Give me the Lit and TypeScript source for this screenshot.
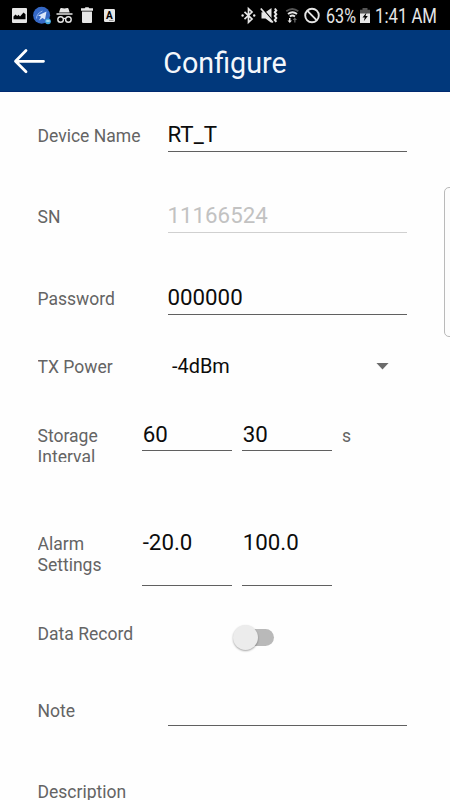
import { LitElement, html, css, svg, nothing } from "lit";
import { customElement, property } from "lit/decorators.js";

@customElement("status-bar")
class StatusBar extends LitElement {
  static styles = css`
    :host { display: flex; height: 30px; background: #000; }
    svg { display: block; width: 450px; height: 30px; }
    text { font-family: Roboto, sans-serif; font-size: 19.5px; fill: #e6e6e6; }
    .badge { font-size: 10px; font-weight: 700; fill: #000; }
  `;
  render() {
    return html`<svg viewBox="0 0 450 30" fill="none">
      ${svg`
      <path fill="#e6e6e6" fill-rule="evenodd" d="M13 8h13a1 1 0 0 1 1 1v13a1 1 0 0 1-1 1H13a1 1 0 0 1-1-1V9a1 1 0 0 1 1-1zM13.5 16.500v2.800h12v-5l-2-1.800-3.500 4-1.500-1.800-1.300 1.300-1.700-1.500z"/>
      <circle cx="41.6" cy="15.3" r="8.5" fill="#3568c5"/>
      <path d="M38 15.500l8.500-4-1.500 8-2.600-1.500-3.400 2.500 2-4z" fill="#dbe6fa"/>
      <path d="M36.500 18.500q0-5 6-7.500" stroke="#93b4ee" stroke-width="1"/>
      <circle cx="48" cy="21.300" r="2.900" fill="#46a9df"/>
      <path d="M46.300 21h3.400" stroke="#fff" stroke-width="1"/>
      <path fill="#e6e6e6" d="M60.300 8.600q.3-.9 1.200-.6l2.900.5 2.800-.5q.9-.3 1.200.6l1.300 3.800h-10.700zM56.500 13.200h16v1.600h-16z"/>
      <circle cx="60.600" cy="19.500" r="2.800" stroke="#e6e6e6" stroke-width="1.400"/>
      <circle cx="68.400" cy="19.500" r="2.800" stroke="#e6e6e6" stroke-width="1.400"/>
      <path d="M63.200 18.800q1.300-.8 2.600 0" stroke="#e6e6e6" stroke-width="1.200"/>
      <path fill="#e6e6e6" d="M81 8.300h3.700l.8-1h3l.8 1H93v2.400H81zM82 11.500h10V22q0 1-1 1h-8q-1 0-1-1z"/>
      <rect x="104" y="9" width="11" height="13" rx="1.200" fill="#e6e6e6"/>
      <text class="badge" x="105.900" y="18.500">A</text>
      <path d="M109 20.400h4.500" stroke="#888" stroke-width=".9"/>
      <path d="M244.500 11.800l7.500 7.200L248.500 22.300V8.700l3.500 3.300-7.500 7.200" stroke="#e6e6e6" stroke-width="1.700"/>
      <circle cx="242.600" cy="15.500" r="1.200" fill="#e6e6e6"/><circle cx="254.200" cy="15.500" r="1.200" fill="#e6e6e6"/>
      <path fill="#e6e6e6" d="M261.500 12.300h4L271.500 8v15l-6-4.400h-4z"/>
      <path d="M261.500 7.500l12.500 14.500" stroke="#000" stroke-width="1.200"/>
      <path d="M260.800 8.500l12 14" stroke="#e6e6e6" stroke-width="1.800"/>
      <path d="M274.800 8.500l1.500 1.900-1.500 1.900 1.500 1.900-1.500 1.900 1.500 1.900-1.500 1.900 1.500 1.900" stroke="#e6e6e6" stroke-width="2"/>
      <path d="M286.300 11.300q6-4.600 12 0" stroke="#555" stroke-width="1.800"/>
      <path d="M288 14q4.500-3.500 9 0M289.800 16.500q2.600-2 5.200 0" stroke="#e6e6e6" stroke-width="1.800"/>
      <path fill="#e6e6e6" d="M290.500 18v2.500h1.500L289.800 23l-2.300-2.500h1.500V18z"/>
      <path fill="#666" d="M295.500 22.500V20H297l-2.200-2.500-2.100 2.500h1.500v2.500z"/>
      <circle cx="312" cy="15.500" r="6.800" stroke="#e6e6e6" stroke-width="1.900"/>
      <path d="M307.200 10.700l9.600 9.600" stroke="#e6e6e6" stroke-width="1.900"/>
      <text x="326" y="22.500" textLength="30" lengthAdjust="spacingAndGlyphs">63%</text>
      <path fill="#555" d="M362.500 8h5v1.700h2.500V14h-10V9.700h2.500z"/>
      <path fill="#e6e6e6" d="M360 13.500h10V23h-10z"/>
      <path fill="#000" d="M366.500 12.500l-4 5h2.300l-1 3.800 4-5.300h-2.300z"/>
      <text x="375" y="22.500" textLength="62" lengthAdjust="spacingAndGlyphs">1:41 AM</text>
      `}
    </svg>`;
  }
}

@customElement("form-row")
class FormRow extends LitElement {
  @property() label = "";
  static styles = css`
    :host { display: flex; align-items: flex-start; box-sizing: border-box; }
    .label { flex: none; width: 104.500px; padding-top: 6px; font-size: 17.550px; line-height: 21px; color: #646464; }
    :host([wide]) .label { width: 130px; }
    .text { display: block; white-space: pre-line; overflow: hidden; }
    :host([clipped]) .text { height: 35.500px; }
  `;
  render() {
    return html`<div class="label"><span class="text">${this.label}</span></div><slot></slot>`;
  }
}

@customElement("app-root")
class AppRoot extends LitElement {
  static styles = css`
    :host { display: block; position: relative; width: 450px; height: 800px; overflow: hidden; background: #fefefe; font-family: Roboto, sans-serif; }
    .bar { display: grid; grid-template-columns: 60px 1fr 60px; align-items: center; height: 62px; background: #01387b; box-sizing: border-box; border-bottom: 1px solid #012a70; }
    .back { width: 34px; height: 28px; margin-left: 12px; }
    .title { color: #f4f7fb; font-size: 28.700px; line-height: 34px; text-align: center; padding-top: 4px; }
    .form { display: flex; flex-direction: column; padding: 28px 43px 0 37.500px; }
    .h82 { height: 82px; } .h81 { height: 81px; } .h68 { height: 68px; } .h69 { height: 69px; }
    .h108 { height: 108px; } .h90 { height: 90px; } .h77 { height: 77px; } .h24 { height: 24px; }
    .field { box-sizing: border-box; width: 240px; height: 31.500px; padding-top: 1px; font-size: 22.300px; line-height: 26px; color: #0c0c0c; border-bottom: 1px solid #606060; }
    .short { width: 90px; height: 31px; margin-right: 10px; text-indent: 0.700px; }
    .tall { height: 58px; }
    .note { height: 31px; }
    .muted { color: #c2c2c2; border-color: #d0d0d0; }
    .select { display: flex; justify-content: space-between; align-items: center; width: 217px; height: 30px; padding-left: 4.500px; font-size: 19.900px; color: #0c0c0c; }
    .caret { width: 13px; height: 7px; background: #6b6b6b; clip-path: polygon(0 0, 100% 0, 50% 100%); }
    .unit { padding-top: 6px; font-size: 17.550px; line-height: 21px; color: #646464; }
    .track { width: 36px; height: 17px; margin: 11px 0 0 95.500px; border-radius: 9px; background: #b9b9b9; display: flex; align-items: center; }
    .thumb { flex: none; width: 25px; height: 25px; border-radius: 50%; background: #ececec; margin-left: -4.500px; box-shadow: 0 1px 2px rgba(0,0,0,.35); }
    .edge { position: absolute; left: 444px; top: 187px; width: 20px; height: 148px; border: 1px solid #b9b9b9; border-radius: 5px; background: #fcfcfc; }
  `;
  field(value: string, kind = "") {
    return html`<div class="field ${kind}">${value || nothing}</div>`;
  }
  render() {
    return html`
      <status-bar></status-bar>
      <header class="bar">
        <svg class="back" viewBox="0 0 34 28" fill="none" stroke="#fff" stroke-width="2.800" stroke-linecap="round" stroke-linejoin="round"><path d="M14 3.500L3.500 14.300 14 24.800M4 14.300h27.500"/></svg>
        <div class="title">Configure</div>
      </header>
      <main class="form">
        <form-row wide class="h81" label="Device Name">${this.field("RT_T")}</form-row>
        <form-row wide class="h82" label="SN">${this.field("11166524", "muted")}</form-row>
        <form-row wide class="h68" label="Password">${this.field("000000")}</form-row>
        <form-row wide class="h69" label="TX Power">
          <div class="select"><span>-4dBm</span><i class="caret"></i></div>
        </form-row>
        <form-row clipped class="h108" label=${"Storage\nInterval"}>
          ${this.field("60", "short")}${this.field("30", "short")}<span class="unit">s</span>
        </form-row>
        <form-row class="h90" label=${"Alarm\nSettings"}>
          ${this.field("-20.0", "short tall")}${this.field("100.0", "short tall")}
        </form-row>
        <form-row class="h77" label="Data Record"><div class="track"><div class="thumb"></div></div></form-row>
        <form-row wide class="h81" label="Note">${this.field("", "note")}</form-row>
        <form-row wide class="h24" label="Description"></form-row>
      </main>
      <div class="edge"></div>
    `;
  }
}
